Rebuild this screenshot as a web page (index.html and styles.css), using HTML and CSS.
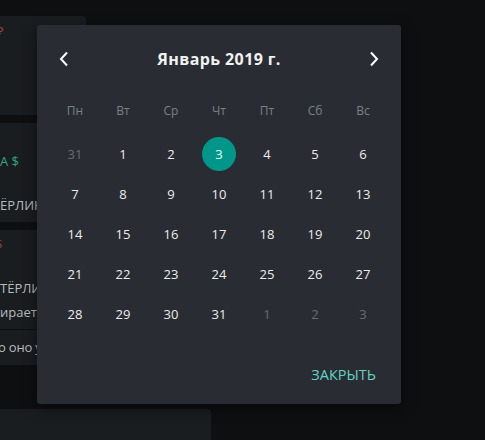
FILE: index.html
```html
<!DOCTYPE html>
<html lang="ru">
<head>
    <meta charset="UTF-8">
    <title>Календарь</title>
    <link rel="stylesheet" href="styles.css">
</head>
<body>
    <div class="feed">
        <div class="card card-first">
            <div class="line"><span class="red">₽</span></div>
        </div>
        <div class="card">
            <div class="line line-top"><span class="green">А $</span></div>
            <div class="line">ЁРЛИНГ</div>
        </div>
        <div class="card card-joined">
            <div class="line line-top"><span class="red">$</span></div>
            <div class="line">ТЁРЛИНГ</div>
            <div class="line">ирает</div>
        </div>
        <div class="card-footer">
            <div class="line">о оно у</div>
        </div>
        <div class="card card-bottom"></div>
    </div>

    <div class="picker">
        <div class="picker-head">
            <button class="nav" aria-label="Назад">
                <svg width="10" height="16" viewBox="0 0 10 16"><path d="M8 1.5 2 8l6 6.5" fill="none" stroke="#fff" stroke-width="2"/></svg>
            </button>
            <div class="month">Январь 2019 г.</div>
            <button class="nav" aria-label="Вперёд">
                <svg width="10" height="16" viewBox="0 0 10 16"><path d="M2 1.5 8 8l-6 6.5" fill="none" stroke="#fff" stroke-width="2"/></svg>
            </button>
        </div>
        <div class="weekdays">
            <span>Пн</span><span>Вт</span><span>Ср</span><span>Чт</span><span>Пт</span><span>Сб</span><span>Вс</span>
        </div>
        <div class="days">
            <span class="other">31</span><span>1</span><span>2</span><span class="selected"><b>3</b></span><span>4</span><span>5</span><span>6</span>
            <span>7</span><span>8</span><span>9</span><span>10</span><span>11</span><span>12</span><span>13</span>
            <span>14</span><span>15</span><span>16</span><span>17</span><span>18</span><span>19</span><span>20</span>
            <span>21</span><span>22</span><span>23</span><span>24</span><span>25</span><span>26</span><span>27</span>
            <span>28</span><span>29</span><span>30</span><span>31</span><span class="other">1</span><span class="other">2</span><span class="other">3</span>
        </div>
        <div class="picker-foot">
            <button class="close">ЗАКРЫТЬ</button>
        </div>
    </div>
</body>
</html>
```

FILE: styles.css
```css
body {
    margin: 0;
    background-color: #0d0f11;
    font-family: "Open Sans", "Noto Sans", sans-serif;
    color: #fff;
    height: 440px;
    overflow: hidden;
}
.feed {
    width: 86px;
    padding-top: 16px;
}
.card {
    background-color: #1a1d20;
    border-radius: 0 4px 4px 0;
    height: 99px;
    margin-bottom: 8px;
    overflow: hidden;
    color: #b9bcbf;
    font-size: 13px;
}
.card-first {
    padding-top: 3px;
    box-sizing: border-box;
}
.card-first .line {
    margin-left: -4px;
}
.card-joined {
    margin-bottom: 1px;
    border-radius: 0;
}
.card-footer {
    background-color: #1a1d20;
    height: 35px;
    margin-bottom: 44px;
    color: #b9bcbf;
    font-size: 13px;
    letter-spacing: -0.2px;
    overflow: hidden;
}
.card-bottom {
    width: 211px;
    height: 31px;
    margin: 0;
    border-radius: 0 4px 0 0;
}
.line {
    white-space: nowrap;
    height: 24px;
    line-height: 24px;
}
.line-top {
    margin-top: 26px;
    margin-bottom: 20px;
}
.card-joined .line-top {
    margin-top: 2px;
    margin-left: -5px;
}
.card-footer .line {
    line-height: 35px;
    height: 35px;
    margin-left: -2px;
}
.red { color: #a3414b; }
.green { color: #2fa77e; }

.picker {
    position: absolute;
    left: 37px;
    top: 25px;
    width: 364px;
    height: 379px;
    box-sizing: border-box;
    padding: 0 14px;
    background-color: #292d33;
    border-radius: 3px;
    box-shadow: 0 4px 14px rgba(0, 0, 0, 0.5);
    display: flex;
    flex-direction: column;
}
.picker-head {
    height: 68px;
    display: flex;
    align-items: center;
    justify-content: space-between;
}
.nav {
    width: 26px;
    height: 30px;
    padding: 0;
    border: none;
    background: none;
    display: flex;
    align-items: center;
    justify-content: center;
    cursor: pointer;
}
.month {
    font-size: 16px;
    font-weight: 700;
    letter-spacing: 0.4px;
    color: #f2f2f2;
}
.weekdays, .days {
    display: grid;
    grid-template-columns: repeat(7, 48px);
}
.weekdays {
    height: 34px;
    margin-bottom: 7px;
    align-items: center;
    font-size: 12px;
    color: #7b8086;
}
.weekdays span, .days span {
    text-align: center;
}
.days {
    grid-auto-rows: 40px;
    font-size: 13px;
    color: #ececec;
}
.days span {
    display: flex;
    align-items: center;
    justify-content: center;
}
.days .other {
    color: #676c72;
}
.days .selected b {
    font-weight: 400;
    width: 34px;
    height: 34px;
    border-radius: 50%;
    background-color: #00978a;
    display: flex;
    align-items: center;
    justify-content: center;
    color: #e8fffb;
}
.picker-foot {
    margin-top: auto;
    display: flex;
    justify-content: flex-end;
    padding-bottom: 12px;
}
.close {
    height: 36px;
    padding: 0 11px;
    border: none;
    background: none;
    font-family: inherit;
    font-size: 14.5px;
    color: #62d3c4;
    cursor: pointer;
}
```
